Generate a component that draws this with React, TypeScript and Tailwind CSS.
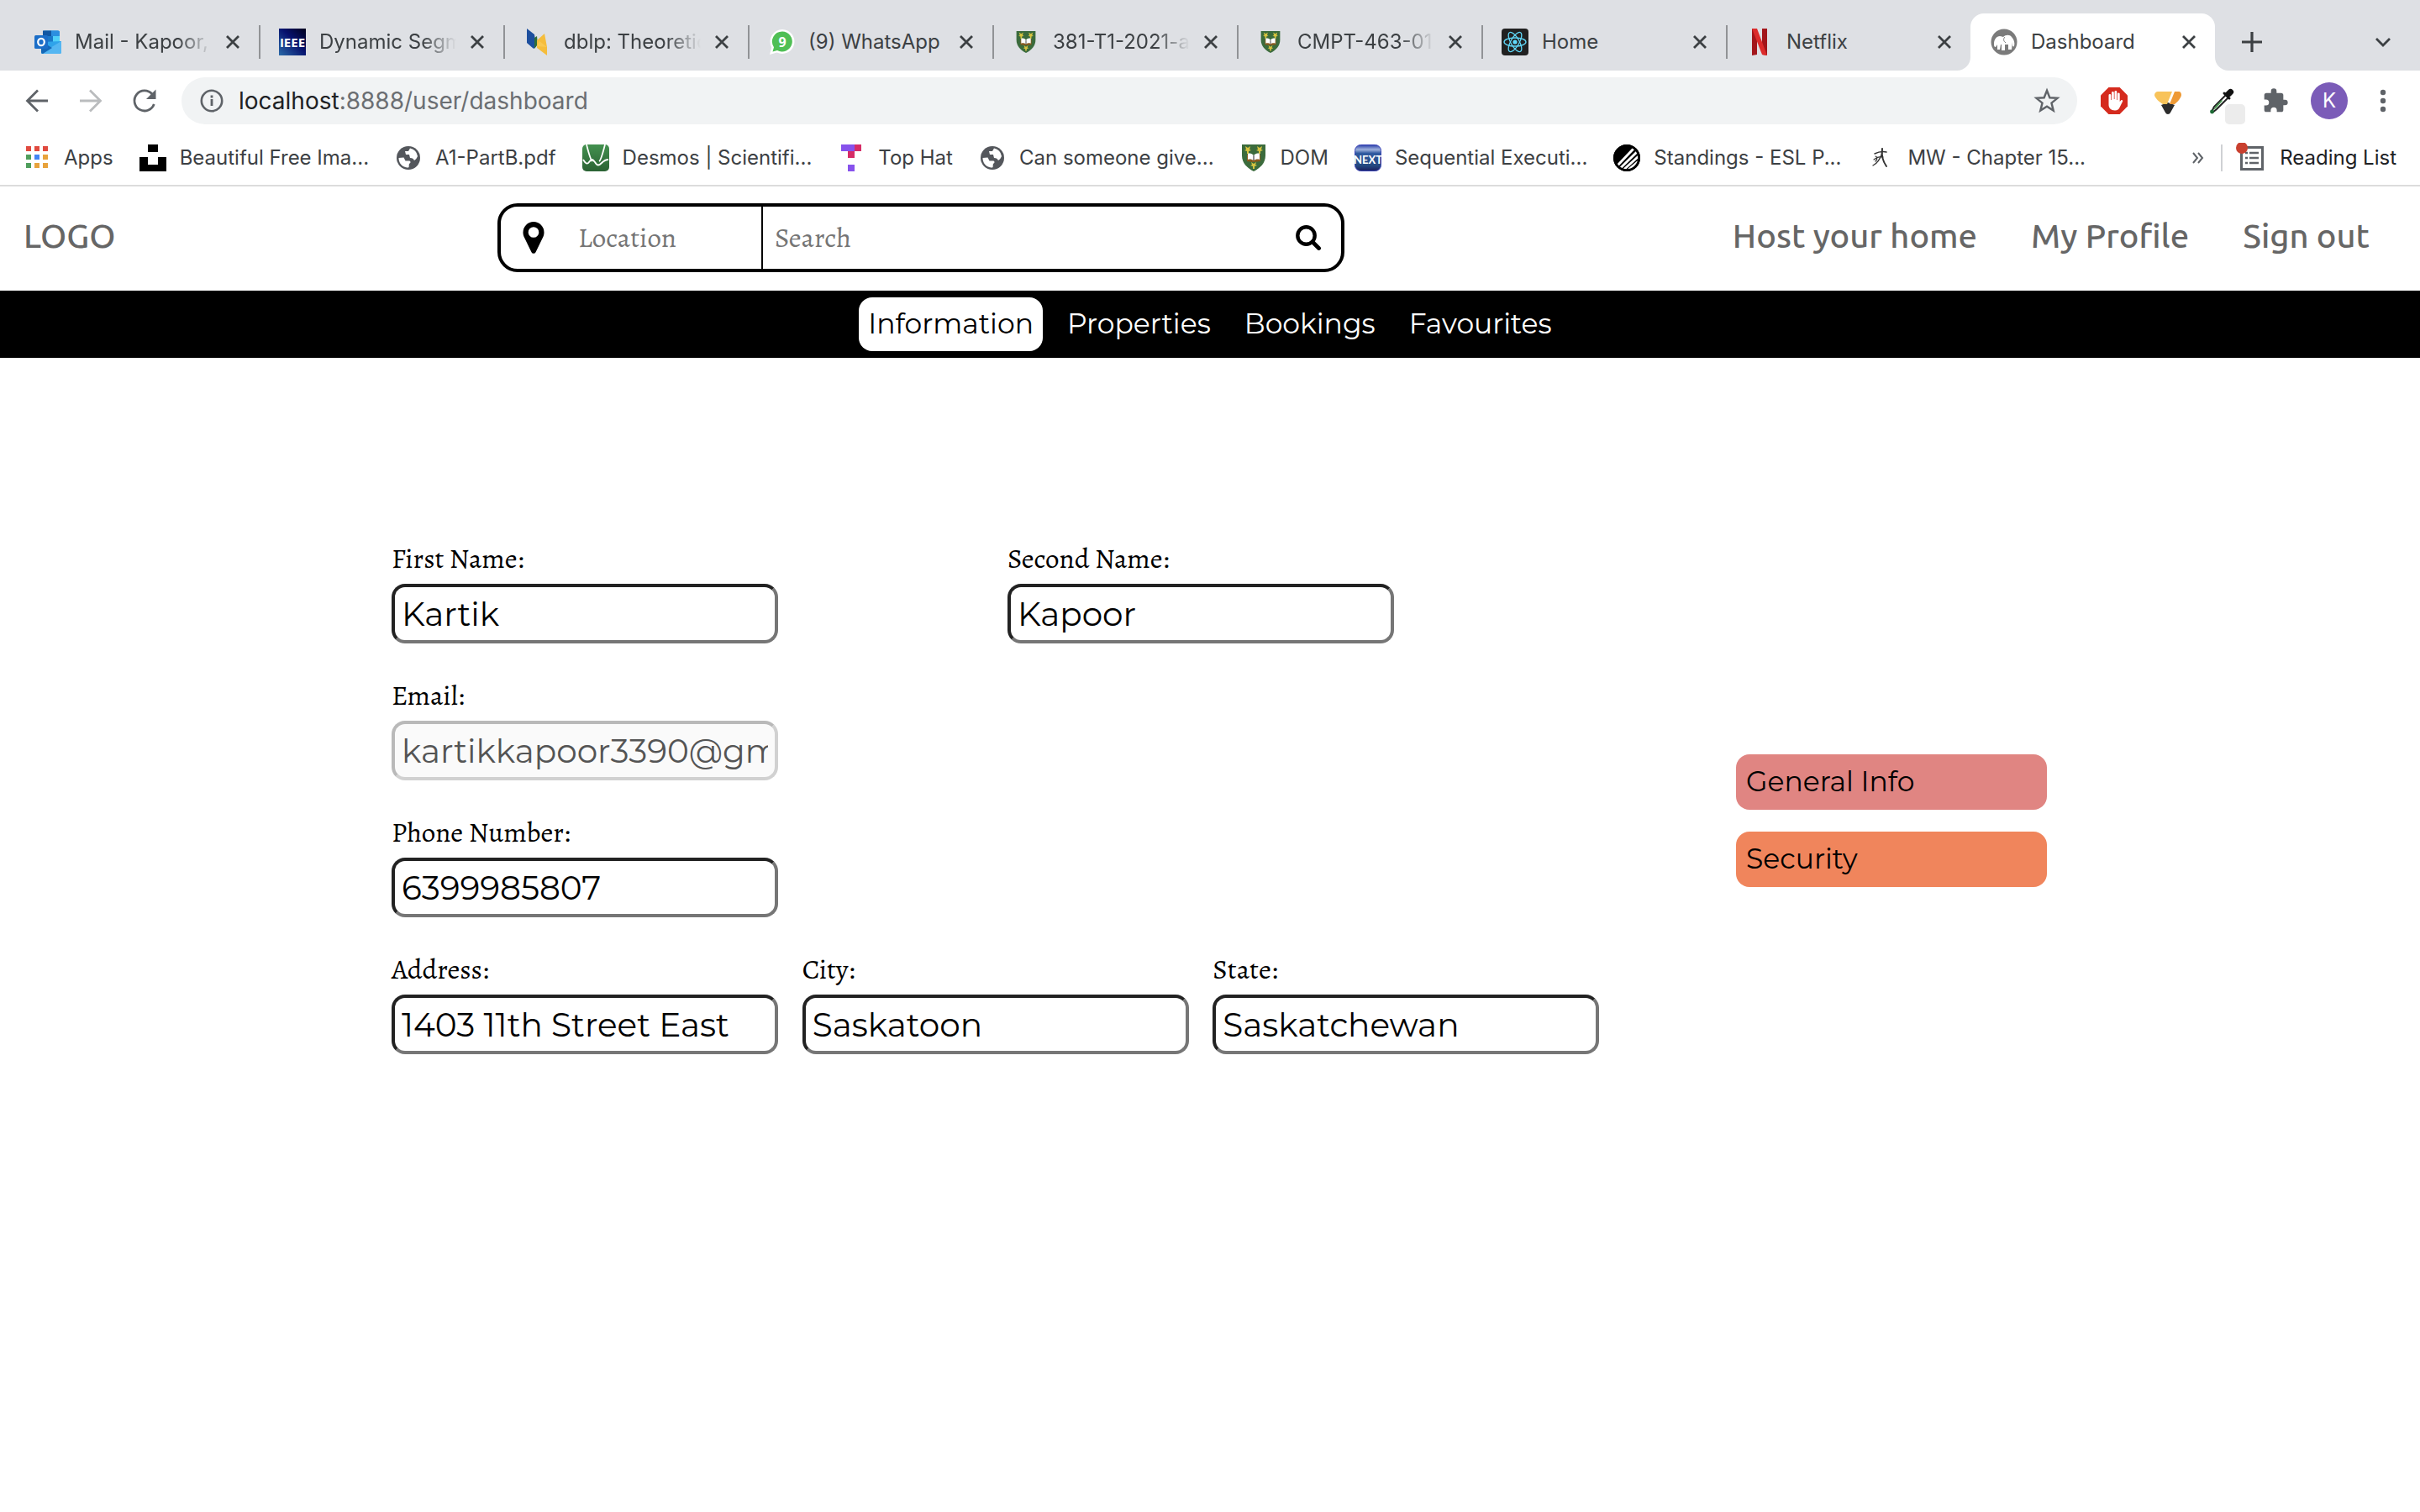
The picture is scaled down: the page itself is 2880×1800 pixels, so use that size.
import type { ReactNode } from 'react';

const chromeFont = "font-['Inter','Roboto',sans-serif]";
const bodyFont = "font-['Montserrat','Inter',sans-serif]";
const serifFont = "font-['Alegreya','Liberation_Serif',serif]";
const headerFont = "font-['Ubuntu','Noto_Sans',sans-serif]";

/* ---------- favicons ---------- */

function OutlookIcon() {
  return (
    <svg viewBox="0 0 32 32" className="size-8">
      <path d="M10 4.500a2 2 0 0 1 2-2h16a2 2 0 0 1 2 2V15H10z" fill="#1b8fdc" />
      <path d="M10 2.500h10V9H10z" fill="#1057a3" />
      <path d="M20 2.500h8a2 2 0 0 1 2 2V9H20z" fill="#2b8fe0" />
      <path d="M14 9h8v7h-8z" fill="#1a78c9" />
      <path d="M22 9h8v7h-8z" fill="#50d0f8" />
      <path d="M8 16l24-1v13a2 2 0 0 1-2 2H10a2 2 0 0 1-2-2z" fill="#2fa3ea" />
      <path d="M32 15L8 29.500a2 2 0 0 0 2 .5h20a2 2 0 0 0 2-2z" fill="#54b6f2" />
      <path d="M8 15l13 8-11 7a2 2 0 0 1-2-2z" fill="#1468b8" />
      <rect x="0" y="8" width="16" height="16" rx="1.500" fill="#1b6ec8" />
      <ellipse cx="8" cy="16" rx="3.800" ry="4.200" fill="none" stroke="#fff" strokeWidth="2.200" />
    </svg>
  );
}

function IeeeIcon() {
  return (
    <svg viewBox="0 0 32 32" className="size-8">
      <defs>
        <linearGradient id="ieee" x1="1" y1="0" x2="0" y2="1">
          <stop offset="0" stopColor="#00001c" />
          <stop offset=".45" stopColor="#07126e" />
          <stop offset="1" stopColor="#2a6aa8" />
        </linearGradient>
      </defs>
      <rect width="32" height="32" fill="url(#ieee)" />
      <text x="16" y="21.500" textAnchor="middle" fontSize="15" fontWeight="700" fill="#fff" fontFamily="Liberation Sans Narrow, Open Sans, sans-serif">
        IEEE
      </text>
    </svg>
  );
}

function DblpIcon() {
  return (
    <svg viewBox="0 0 32 32" className="size-8">
      <path d="M4 0l9 7 2 14-3 3-8-7z" fill="#1d4f9e" />
      <path d="M13 11l3-2 1 10-4 5z" fill="#2f6e3a" />
      <path d="M16 14l9-8 3 16v10l-12-9z" fill="#f5bd3c" />
      <path d="M16 21l3-6 9 7z" fill="#f9c851" />
    </svg>
  );
}

function WhatsAppIcon() {
  return (
    <svg viewBox="0 0 32 32" className="size-8">
      <path d="M17 1a14.500 14.500 0 1 1-6.500 27.500L2 31l2.300-8.500A14.500 14.500 0 0 1 17 1z" fill="#fff" />
      <path d="M17 3.500a12 12 0 1 1-6 22.500l-5.500 1.500 1.500-5.300A12 12 0 0 1 17 3.500z" fill="#4fbf55" />
      <text x="17" y="21.500" textAnchor="middle" fontSize="16" fontWeight="700" fill="#fff" fontFamily="Open Sans, sans-serif">
        9
      </text>
    </svg>
  );
}

function ShieldIcon({ className }: { className: string }) {
  return (
    <svg viewBox="0 0 28 32" className={className}>
      <path d="M0 0h28v13c0 9-6 15-14 19C6 28 0 22 0 13z" fill="#3b6b3c" />
      <g fill="#d6c33f">
        <path d="M4 2l3 2 3-2-1 4 2 1-3 1v3H6V8L3 7l2-1z" />
        <path d="M18 2l3 2 3-2-1 4 2 1-3 1v3h-2V8l-3-1 2-1z" />
        <path d="M11 21l3 2 3-2-1 3 2 1-3 1v3h-2v-3l-3-1 2-1z" />
      </g>
      <path d="M6 12l8 1 8-1v8l-8 1-8-1z" fill="#8a5a1e" />
      <path d="M7 11c3-1 5 0 7 2 2-2 4-3 7-2v7c-3-1-5 0-7 1-2-1-4-2-7-1z" fill="#fff" />
      <path d="M14 13v6" stroke="#222" strokeWidth="1" />
    </svg>
  );
}

function ReactIcon() {
  return (
    <svg viewBox="0 0 32 32" className="size-8">
      <rect width="32" height="32" rx="4" fill="#212121" />
      <g fill="none" stroke="#61dafb" strokeWidth="1.300">
        <ellipse cx="16" cy="16" rx="13" ry="5" />
        <ellipse cx="16" cy="16" rx="13" ry="5" transform="rotate(60 16 16)" />
        <ellipse cx="16" cy="16" rx="13" ry="5" transform="rotate(120 16 16)" />
      </g>
      <circle cx="16" cy="16" r="2.600" fill="#61dafb" />
    </svg>
  );
}

function NetflixIcon() {
  return (
    <svg viewBox="0 0 32 32" className="size-8">
      <path d="M7 0h6v31l-6 1z" fill="#a3161b" />
      <path d="M19 0h6v32l-6-1z" fill="#a3161b" />
      <path d="M7 0h6l12 32-6-1z" fill="#dc2b2b" />
    </svg>
  );
}

function MampIcon() {
  return (
    <svg viewBox="0 0 32 32" className="size-8">
      <circle cx="16" cy="16" r="15.500" fill="#7b7b7b" />
      <path
        d="M4 18c0-5 3-9 7-9 2 0 3 1 4 1 3-3 8-3 10 0 3 3 4 7 3 11-1 1-2 0-2-2v-3l-1 9h-4v-6h-4v7h-4v-7h-1l-1 6H8v-6l-2 3c-2 0-2-2-2-4z"
        fill="#fff"
      />
      <path d="M17 10c-2 2-2 5 1 7" stroke="#7b7b7b" strokeWidth="1" fill="none" />
    </svg>
  );
}

function UnsplashIcon() {
  return (
    <svg viewBox="0 0 32 32" className="size-8">
      <path d="M10 0h12v9H10zM0 15h10v9h12v-9h10v17H0z" fill="#000" />
    </svg>
  );
}

function GlobeIcon() {
  return (
    <svg viewBox="0 0 32 32" className="size-8">
      <circle cx="16" cy="16" r="14" fill="#54575c" />
      <path
        d="M18 4.500l-2 3.500h-4l1 4h4l1 4c3 0 4 1 5 3 2-1 3-3 4-5A11.600 11.600 0 0 0 18 4.500zM4.500 16c0 6 4 11 10 11.500 4 .5 1-3 3-5 2-1 1-3-1-3h-4l-2-4z"
        fill="#fff"
      />
    </svg>
  );
}

function DesmosIcon() {
  return (
    <svg viewBox="0 0 32 32" className="size-8">
      <defs>
        <linearGradient id="desmos" x1="0" y1="0" x2="0" y2="1">
          <stop offset="0" stopColor="#43914f" />
          <stop offset="1" stopColor="#2b6234" />
        </linearGradient>
      </defs>
      <rect width="32" height="32" rx="5" fill="url(#desmos)" />
      <path d="M5 0c3 12 5 19 7 20M27 0c-3 12-5 19-7 20" fill="none" stroke="#fff" strokeWidth="1.800" />
      <path d="M1 18c3 5 5 6 7 3 3-4 4-4 7 0 3 5 5 4 8 1 3-3 5-4 8-4" fill="none" stroke="#fff" strokeWidth="1.800" />
    </svg>
  );
}

function TopHatIcon() {
  return (
    <svg viewBox="0 0 32 32" className="size-8">
      <path d="M4 0h16v8H4z" fill="#8752ec" />
      <path d="M20 0h8v8h-8zM12 8h8v8h-8z" fill="#d62c66" />
      <path d="M12 24h8v8h-8z" fill="#8752ec" />
    </svg>
  );
}

function NextIcon() {
  return (
    <svg viewBox="0 0 32 32" className="size-8">
      <defs>
        <linearGradient id="next" x1="0" y1="0" x2="0" y2="1">
          <stop offset="0" stopColor="#2a3fa8" />
          <stop offset=".18" stopColor="#9fb2dc" />
          <stop offset=".32" stopColor="#2f5aa0" />
          <stop offset=".8" stopColor="#24497f" />
          <stop offset="1" stopColor="#1b1f5e" />
        </linearGradient>
      </defs>
      <rect x=".5" y=".5" width="31" height="31" rx="7" fill="url(#next)" stroke="#3a44b8" />
      <text x="16" y="22.500" textAnchor="middle" fontSize="13" fontWeight="700" fill="#fff" fontFamily="Lato, sans-serif">
        NEXT
      </text>
    </svg>
  );
}

function EslIcon() {
  return (
    <svg viewBox="0 0 32 32" className="size-8">
      <circle cx="16" cy="16" r="16" fill="#000" />
      <path
        d="M5 25L24 5M8.500 28L28 9M13.500 29L29.500 14.500M19 29.500L29 21"
        stroke="#fff"
        strokeWidth="3"
        strokeLinecap="round"
      />
      <circle cx="16" cy="16" r="14.600" fill="none" stroke="#000" strokeWidth="2.800" />
    </svg>
  );
}

function MwIcon() {
  return (
    <svg viewBox="0 0 32 32" className="size-8">
      <g fill="none" stroke="#333" strokeLinecap="round">
        <path d="M18 5c-1 7 0 14 5 21" strokeWidth="2" />
        <path d="M9 11c4-2 9-3 14-2" strokeWidth="1.500" />
        <path d="M18 10c-2 6-5 12-11 15" strokeWidth="1.300" />
        <path d="M8 18c4-3 7-4 11-3M10 14c3 1 2 4 0 6" strokeWidth="1.200" />
      </g>
    </svg>
  );
}

function AppsIcon() {
  const colors = ['#e04a3f', '#e04a3f', '#e04a3f', '#4f9e5c', '#4285f4', '#e8a33d', '#4f9e5c', '#e8a33d', '#e8a33d'];
  return (
    <svg viewBox="0 0 32 32" className="size-8">
      {colors.map((color, i) => (
        <rect key={i} x={3 + (i % 3) * 10} y={2 + Math.floor(i / 3) * 10} width="6" height="6" fill={color} />
      ))}
    </svg>
  );
}

/* ---------- browser controls ---------- */

function CloseIcon() {
  return (
    <svg viewBox="0 0 18 18" className="size-[18px] text-[#3c4043]">
      <path d="M2 2l14 14M16 2L2 16" stroke="currentColor" strokeWidth="2.800" />
    </svg>
  );
}

type TabProps = { title: string; icon: ReactNode; active?: boolean; divider?: boolean; fade?: boolean };

function TabFoot({ side }: { side: 'left' | 'right' }) {
  return (
    <svg
      viewBox="0 0 16 16"
      className={side === 'left' ? 'absolute bottom-0 -left-4 size-4' : 'absolute -right-4 bottom-0 size-4 -scale-x-100'}
    >
      <path d="M16 0v16H0A16 16 0 0 0 16 0z" fill="#fff" />
    </svg>
  );
}

function Tab({ title, icon, active, divider, fade }: TabProps) {
  return (
    <div
      className={
        active
          ? 'relative flex h-[68px] max-w-[291px] flex-1 items-center rounded-t-2xl bg-white'
          : 'flex h-[68px] max-w-[291px] flex-1 items-center'
      }
    >
      {active && <TabFoot side="left" />}
      {active && <TabFoot side="right" />}
      <span className={divider ? 'h-10 w-[2px] bg-[#919396]' : 'h-10 w-[2px]'} />
      <span className="ml-[22px] shrink-0">{icon}</span>
      <span
        className={
          fade
            ? 'ml-4 flex-1 overflow-hidden text-2xl whitespace-nowrap text-[#3c4043] [mask-image:linear-gradient(to_right,black_75%,transparent)]'
            : 'ml-4 flex-1 overflow-hidden text-2xl whitespace-nowrap text-[#3c4043]'
        }
      >
        {title}
      </span>
      <button type="button" aria-label={`Close ${title}`} className="mr-[22px] ml-4">
        <CloseIcon />
      </button>
    </div>
  );
}

const tabs: TabProps[] = [
  { title: 'Mail - Kapoor, ', icon: <OutlookIcon />, fade: true },
  { title: 'Dynamic Segm', icon: <IeeeIcon />, divider: true, fade: true },
  { title: 'dblp: Theoretic', icon: <DblpIcon />, divider: true, fade: true },
  { title: '(9) WhatsApp', icon: <WhatsAppIcon />, divider: true },
  { title: '381-T1-2021-a', icon: <ShieldIcon className="mx-1 h-[26px] w-6" />, divider: true, fade: true },
  { title: 'CMPT-463-01', icon: <ShieldIcon className="mx-1 h-[26px] w-6" />, divider: true, fade: true },
  { title: 'Home', icon: <ReactIcon />, divider: true },
  { title: 'Netflix', icon: <NetflixIcon />, divider: true },
  { title: 'Dashboard', icon: <MampIcon />, active: true },
];

function TabStrip() {
  return (
    <div className="flex items-center bg-[#dee0e4] pt-4 pr-[34px] pl-[17px]">
      {tabs.map((tab) => (
        <Tab key={tab.title} {...tab} />
      ))}
      <button type="button" aria-label="New tab" className="ml-8 text-[#3c4043]">
        <svg viewBox="0 0 24 24" className="size-6">
          <path d="M12 0v24M0 12h24" stroke="currentColor" strokeWidth="3.200" />
        </svg>
      </button>
      <button type="button" aria-label="Search tabs" className="ml-auto text-[#3c4043]">
        <svg viewBox="0 0 20 12" className="h-3 w-5">
          <path d="M2 2l8 8 8-8" fill="none" stroke="currentColor" strokeWidth="2.800" />
        </svg>
      </button>
    </div>
  );
}

function Toolbar() {
  return (
    <div className="flex h-[72px] items-center bg-white pr-7 pl-7 text-[#5f6368]">
      <button type="button" aria-label="Back">
        <svg viewBox="0 0 32 32" className="size-8">
          <path d="M29 16H5M17 3.500L4.500 16 17 28.500" fill="none" stroke="currentColor" strokeWidth="2.800" />
        </svg>
      </button>
      <button type="button" aria-label="Forward" className="ml-8 text-[#babcbe]">
        <svg viewBox="0 0 32 32" className="size-8">
          <path d="M3 16h24M15 3.500L27.500 16 15 28.500" fill="none" stroke="currentColor" strokeWidth="2.800" />
        </svg>
      </button>
      <button type="button" aria-label="Reload" className="ml-8">
        <svg viewBox="0 0 32 32" className="size-8">
          <path d="M27.300 20A12 12 0 1 1 25 8" fill="none" stroke="currentColor" strokeWidth="2.800" />
          <path d="M29.500 2.500V14H18z" fill="currentColor" />
        </svg>
      </button>
      <div className="ml-7 flex h-14 flex-1 items-center rounded-full bg-[#f1f3f4] pr-5 pl-5">
        <svg viewBox="0 0 32 32" className="size-8">
          <circle cx="16" cy="16" r="12.200" fill="none" stroke="currentColor" strokeWidth="2.600" />
          <path d="M16 14v8M16 9.500v3" stroke="currentColor" strokeWidth="2.800" />
        </svg>
        <p className="ml-4 flex-1 text-[28px] text-[#6b6e72]">
          <span className="text-[#202124]">localhost</span>:8888/user/dashboard
        </p>
        <button type="button" aria-label="Bookmark this page">
          <svg viewBox="0 0 24 24" className="size-8">
            <path
              d="M12 2.800l2.500 6.400 6.900.4-5.300 4.400 1.700 6.700-5.800-3.700-5.800 3.700L7.900 14 2.600 9.600l6.900-.4z"
              fill="none"
              stroke="currentColor"
              strokeWidth="1.800"
            />
          </svg>
        </button>
      </div>
      <button type="button" aria-label="Ad blocker" className="ml-7">
        <svg viewBox="0 0 32 32" className="size-8">
          <path d="M9.400 0h13.200L32 9.400v13.200L22.600 32H9.400L0 22.600V9.400z" fill="#d52b1e" />
          <path
            d="M9.500 17V9.500a1.400 1.400 0 0 1 2.800 0V15h.7V6.500a1.400 1.400 0 0 1 2.800 0V14h.7V5.500a1.400 1.400 0 0 1 2.800 0V15h.7V7.500a1.400 1.400 0 0 1 2.700 0V17l1.400-1.500c1-1 2.600 0 2 1.200L22.500 24c-1 2-2.500 3.500-5.500 3.500-5 0-7.500-3-7.500-7z"
            fill="#fff"
          />
        </svg>
      </button>
      <button type="button" aria-label="Extension" className="ml-8">
        <svg viewBox="0 0 32 32" className="size-8">
          <path d="M8 21l8-3 8 3-5 9c-1 2.500-5 2.500-6 0z" fill="#2c2c2c" />
          <path d="M4 5h17l-6 15H10C6 18 0 12 0 9c0-2 2-4 4-4z" fill="#f8c35a" />
          <path d="M24 5h5c2 0 3 2 3 4 0 3-5 9-8 11h-6z" fill="#ee9a36" />
        </svg>
      </button>
      <button type="button" aria-label="Colour picker" className="relative ml-8">
        <svg viewBox="0 0 32 32" className="size-8">
          <path d="M21 9l3 3L10 26l-5 4-1-1 3-6z" fill="#fff" stroke="#222" strokeWidth="2" />
          <path d="M17 16L9 25l-3 2 3-5 7-7z" fill="#4b9b53" />
          <path d="M19 7l6 6M21 8l4-4c2-2 5 1 3 3l-4 4z" fill="#111" stroke="#111" strokeWidth="3" strokeLinecap="round" />
          <circle cx="4.500" cy="29" r="2.400" fill="#1d6b36" />
        </svg>
        <span className="absolute top-5 left-5 h-6 w-6 rounded-[5px] bg-[#ececec]" />
      </button>
      <button type="button" aria-label="Extensions" className="ml-8">
        <svg viewBox="0 0 24 24" className="size-8" fill="currentColor">
          <path d="M20.500 11H19V7a2 2 0 0 0-2-2h-4V3.500a2.500 2.500 0 0 0-5 0V5H4a2 2 0 0 0-2 2v3.800h1.500a2.700 2.700 0 0 1 0 5.400H2V20a2 2 0 0 0 2 2h3.800v-1.500a2.700 2.700 0 0 1 5.400 0V22H17a2 2 0 0 0 2-2v-4h1.500a2.500 2.500 0 0 0 0-5z" />
        </svg>
      </button>
      <button type="button" aria-label="Profile" className="ml-[26px] size-11 rounded-full bg-[#7b5cb8] text-2xl text-white">
        K
      </button>
      <button type="button" aria-label="Menu" className="ml-[26px]">
        <svg viewBox="0 0 32 32" className="size-8" fill="currentColor">
          <circle cx="16" cy="6" r="3.200" />
          <circle cx="16" cy="16" r="3.200" />
          <circle cx="16" cy="26" r="3.200" />
        </svg>
      </button>
    </div>
  );
}

const bookmarks: { title: string; icon: ReactNode }[] = [
  { title: 'Apps', icon: <AppsIcon /> },
  { title: 'Beautiful Free Ima...', icon: <UnsplashIcon /> },
  { title: 'A1-PartB.pdf', icon: <GlobeIcon /> },
  { title: 'Desmos | Scientifi...', icon: <DesmosIcon /> },
  { title: 'Top Hat', icon: <TopHatIcon /> },
  { title: 'Can someone give...', icon: <GlobeIcon /> },
  { title: 'DOM', icon: <ShieldIcon className="mx-[2px] h-8 w-7" /> },
  { title: 'Sequential Executi...', icon: <NextIcon /> },
  { title: 'Standings - ESL P...', icon: <EslIcon /> },
  { title: 'MW - Chapter 15...', icon: <MwIcon /> },
];

function BookmarksBar() {
  return (
    <div className="flex h-[66px] items-center border-b-2 border-[#dcdcdc] bg-white pr-7 pl-7 text-2xl whitespace-nowrap text-[#3c4043]">
      <div className="flex items-center gap-[31px]">
        {bookmarks.map((b) => (
          <a key={b.title} href="#" className="flex items-center gap-4">
            {b.icon}
            {b.title}
          </a>
        ))}
      </div>
      <button type="button" aria-label="More bookmarks" className="ml-auto">
        <svg viewBox="0 0 14 14" className="size-[14px]">
          <path d="M1 1l5 6-5 6M7 1l5 6-5 6" fill="none" stroke="#5f6368" strokeWidth="2" />
        </svg>
      </button>
      <span className="ml-5 h-8 w-[2px] bg-[#cfd1d4]" />
      <button type="button" className="ml-4 flex items-center gap-4 text-[#202124]">
        <svg viewBox="0 0 36 36" className="size-9">
          <rect x="6.500" y="5.500" width="25" height="26" fill="#fff" stroke="#5f6368" strokeWidth="3" />
          <path d="M11 12h3M11 18h3M11 24h3M16 12h11M16 18h11M16 24h11" stroke="#5f6368" strokeWidth="2.400" />
          <circle cx="7" cy="6" r="7" fill="#c9402f" />
        </svg>
        Reading List
      </button>
    </div>
  );
}

/* ---------- page ---------- */

function MarkerIcon() {
  return (
    <svg viewBox="0 0 26 38" className="h-[38px] w-[26px] shrink-0 text-black">
      <path
        fill="currentColor"
        fillRule="evenodd"
        d="M13 0a12.500 12.500 0 0 1 12.500 12.500c0 2-.3 3.600-1 5.200L15.500 36.300a2.800 2.800 0 0 1-5 0L1.500 17.700c-.7-1.600-1-3.200-1-5.200A12.500 12.500 0 0 1 13 0zm0 6.200a6.300 6.300 0 1 0 0 12.600 6.300 6.300 0 0 0 0-12.600z"
      />
    </svg>
  );
}

function SearchIcon() {
  return (
    <svg viewBox="0 0 30 30" className="size-[30px]">
      <circle cx="12.500" cy="12.500" r="10.200" fill="none" stroke="currentColor" strokeWidth="4.400" />
      <path d="M20 20l7.500 7.500" stroke="currentColor" strokeWidth="4.800" strokeLinecap="round" />
    </svg>
  );
}

function SiteHeader() {
  return (
    <header className="flex h-[124px] items-center bg-white pr-[60px] pb-[2px] pl-7 text-[#666]">
      <a href="#" className={`w-[564px] pb-1 text-[40px] font-medium ${headerFont}`}>
        LOGO
      </a>
      <form
        role="search"
        className={`flex h-[82px] w-[36.1%] overflow-hidden rounded-3xl border-4 border-black bg-white text-[33px] text-[#757575] ${serifFont}`}
      >
        <label className="flex w-[312px] items-center border-r-2 border-black pl-[26px]">
          <MarkerIcon />
          <input aria-label="Location" placeholder="Location" className="ml-10 w-full min-w-0 outline-none placeholder:text-[#757575]" />
        </label>
        <input
          aria-label="Search"
          placeholder="Search"
          className="min-w-0 flex-1 pl-[14px] outline-none placeholder:text-[#757575]"
        />
        <button type="submit" aria-label="Submit search" className="mr-6 text-black">
          <SearchIcon />
        </button>
      </form>
      <nav className={`ml-auto flex gap-16 pb-1 text-[40px] font-medium ${headerFont}`}>
        <a href="#">Host your home</a>
        <a href="#">My Profile</a>
        <a href="#">Sign out</a>
      </nav>
    </header>
  );
}

const sections = ['Information', 'Properties', 'Bookings', 'Favourites'];

function SectionNav() {
  return (
    <nav className="flex h-20 items-center justify-center gap-[18px] bg-black text-[33px] text-white">
      {sections.map((s, i) => (
        <a
          key={s}
          href="#"
          className={
            i === 0
              ? 'flex h-16 items-center rounded-2xl bg-white px-[11px] text-black'
              : 'flex h-16 items-center rounded-2xl px-[11px]'
          }
        >
          {s}
        </a>
      ))}
    </nav>
  );
}

type FieldProps = { id: string; label: string; value: string; type?: string; disabled?: boolean };

function Field({ id, label, value, type = 'text', disabled }: FieldProps) {
  return (
    <div className="flex flex-1 flex-col pb-12">
      <label htmlFor={id} className={`mb-4 text-[33px] leading-7 text-black ${serifFont}`}>
        {label}
      </label>
      <input
        id={id}
        type={type}
        defaultValue={value}
        disabled={disabled}
        className="h-[71px] w-[460px] rounded-2xl border-4 border-t-[#222] border-r-[#767676] border-b-[#767676] border-l-[#222] bg-white px-2 text-[39px] text-black outline-none disabled:border-t-[#b9b9b9] disabled:border-r-[#d1d1d1] disabled:border-b-[#d1d1d1] disabled:border-l-[#b9b9b9] disabled:bg-[#fafafa] disabled:text-[#545454]"
      />
    </div>
  );
}

function Profile() {
  return (
    <main className="flex items-center gap-[134px] pt-[225px] pr-[444px] pl-[466px]">
      <form className="min-w-0 flex-1">
        <div className="flex">
          <Field id="first-name" label="First Name:" value="Kartik" />
          <Field id="second-name" label="Second Name:" value="Kapoor" />
        </div>
        <div className="flex">
          <Field id="email" label="Email:" value="kartikkapoor3390@gmail.com" type="email" disabled />
        </div>
        <div className="flex">
          <Field id="phone" label="Phone Number:" value="6399985807" type="tel" />
        </div>
        <div className="flex">
          <Field id="address" label="Address:" value="1403 11th Street East" />
          <Field id="city" label="City:" value="Saskatoon" />
          <Field id="state" label="State:" value="Saskatchewan" />
        </div>
      </form>
      <aside className="flex w-[370px] flex-col gap-[26px] text-[33px] text-black">
        <button type="button" className="h-[66px] rounded-2xl bg-[#e08582] px-3 text-left">
          General Info
        </button>
        <button type="button" className="h-[66px] rounded-2xl bg-[#f0855c] px-3 text-left">
          Security
        </button>
      </aside>
    </main>
  );
}

export default function App() {
  return (
    <div className={`min-h-screen bg-white ${bodyFont}`}>
      <div className={chromeFont}>
        <TabStrip />
        <Toolbar />
        <BookmarksBar />
      </div>
      <SiteHeader />
      <SectionNav />
      <Profile />
    </div>
  );
}
